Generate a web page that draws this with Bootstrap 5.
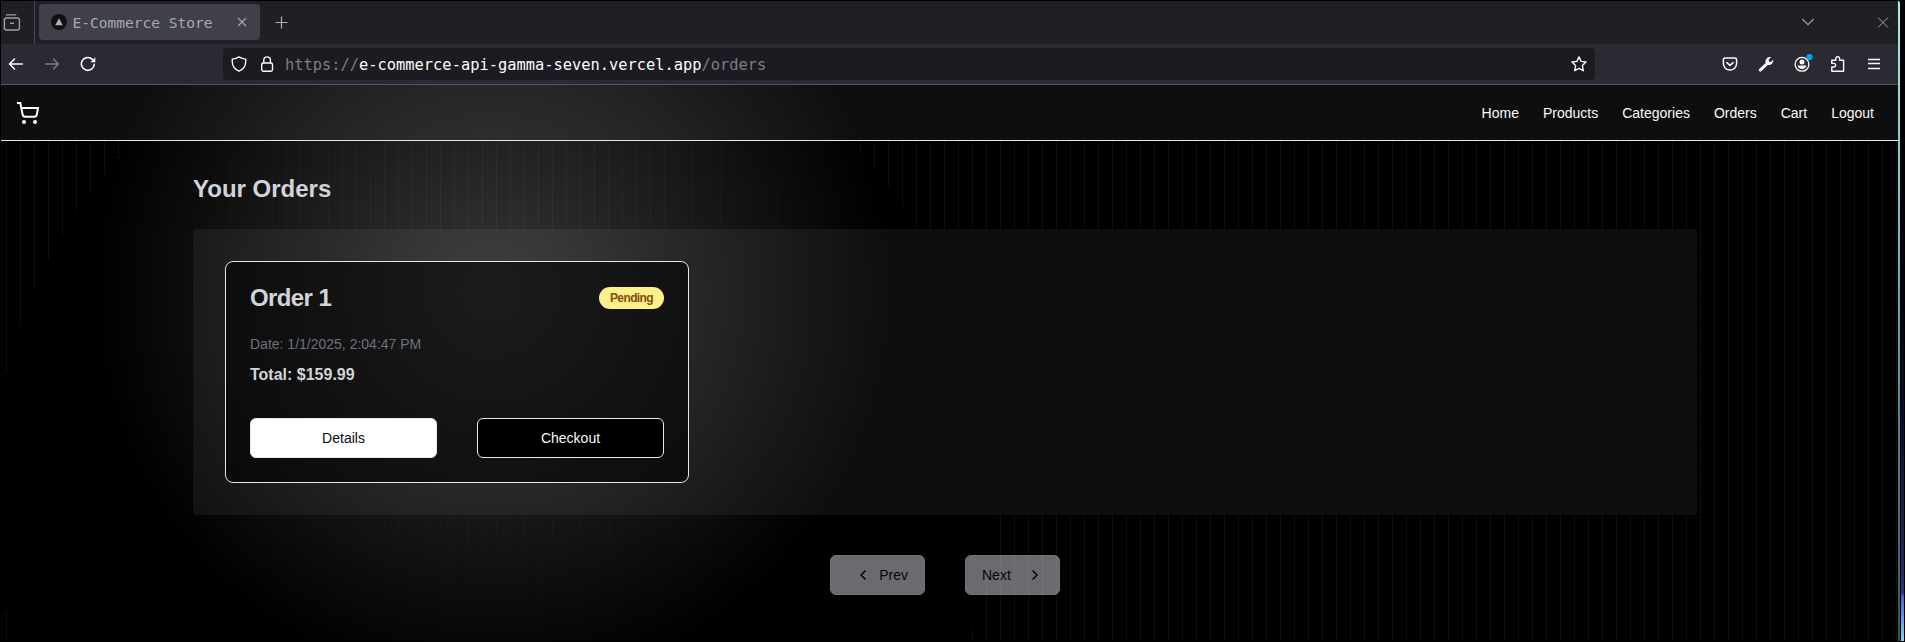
<!DOCTYPE html>
<html lang="en" data-bs-theme="dark">
<head>
<meta charset="utf-8">
<meta name="viewport" content="width=device-width, initial-scale=1">
<title>E-Commerce Store</title>
<link href="https://cdn.jsdelivr.net/npm/bootstrap@5.3.0/dist/css/bootstrap.min.css" rel="stylesheet">
<style>
  body { background: #000; height: 642px; overflow: hidden; font-family: "Liberation Sans", Arial, sans-serif; font-size: 14px; line-height: 20px; }
  svg { display: block; flex: none; }
  .app-window { width: 1897px; height: 640px; margin: 1px 0 0 1px; }
  .desk-edge { width: 7px; height: 640px; margin-top: 1px; }
  .glow-edge { width: 2px; height: 640px; background: linear-gradient(#a9efee 0, #9ed8d8 80px, #7fb5b6 240px, #5b8587 420px, #38545a 100%); border-top-right-radius: 2px; }
  .wall { width: 4px; height: 640px; margin-left: 1px; background: linear-gradient(#000 0, #030308 300px, #0d1030 430px, #1f1d3c 490px, #262660 560px, #2d3486 592px, #4068e0 596px, #4a7cf0 606px, #5b9df0 618px, #80d8f4 640px); clip-path: inset(0 1px 0 0); }
  .tabstrip { height: 43px; background: #201f26; color: #9f9fa3; }
  .tab-sep { width: 1px; height: 43px; background: #47464f; }
  .browser-tab { width: 221px; height: 36px; background: #40404a; border-radius: 4px; font: 14.55px/20px "DejaVu Sans Mono", monospace; color: #a9a9ad; }
  .toolbar-row { height: 41px; background: #2b2a33; border-bottom: 1px solid #55545f; color: #fbfbfe; }
  .urlbar { width: 1372px; height: 32px; background: #1c1b22; border-radius: 4px; font: 15.38px/20px "DejaVu Sans Mono", monospace; }
  .dim { color: #7e7d84; }
  .page { height: 556px; background: #000; }
  .backdrop { inset: 0; background-image: linear-gradient(to right, #4f4f4f2e 1px, transparent 1px), linear-gradient(to bottom, #8080800a 1px, transparent 1px); background-size: 14px 24px; background-position: 5px 0; }
  .spot { left: -9px; top: -94px; width: 1000px; height: 1000px; background: radial-gradient(circle 400px at 50% 300px, #fbfbfb36, #000); }
  .site-nav, .orders-panel { background: linear-gradient(#ffffff0e, #ffffff0e), radial-gradient(circle 400px at var(--spot-at), #fbfbfb36, #000) #000; }
  .site-nav { --spot-at: 491px 206px; height: 56px; }
  .site-nav { box-shadow: inset 0 -1px #e5e7eb; }
  .site-nav a { color: #fafafa; padding: 0; }
  .content-col { width: 1504px; margin-left: 192px; }
  h1 { font-size: 24px; line-height: 32px; color: #d1d5db; }
  .orders-panel { --spot-at: 299px 62px; height: 286px; padding: 32px; border-radius: 4px; }
  .order-card { width: 464px; height: 222px; padding: 24px; border: 1px solid #e5e7eb; border-radius: 8px; background: rgba(0,0,0,.57); color: #d4d4d8; }
  .order-card h2 { font-size: 24px; line-height: 24px; letter-spacing: -.6px; color: #d1d5db; }
  .order-status { width: 65px; height: 22px; font-size: 12px; line-height: 22px; letter-spacing: -.6px; background: #fef08a; color: #854d0e; }
  .order-date { color: #6b7280; }
  .order-total { font-size: 16px; line-height: 24px; margin-top: 9px; }
  .btn { height: 40px; padding: 0 16px; border-radius: 6px; font-size: 14px; line-height: 20px; }
  .btn-details { background: #fff; border-color: #e5e7eb; color: #0a0a14; }
  .btn-checkout { background: #000; border-color: #e5e7eb; color: #fafafa; }
  .btn-page { width: 95px; background: #d4d6dc; border-color: #e5e7eb; color: #09090b; opacity: .5; }
</style>
</head>
<body class="d-flex">
<div class="app-window flex-shrink-0">
  <div class="tabstrip d-flex align-items-start">
    <svg style="margin-top:13px" width="33" height="18" viewBox="0 0 33 18" fill="none" stroke="currentColor" stroke-width="1.4"><path d="M5.500.9h9.200" stroke-linecap="round"/><rect x="3.400" y="4" width="15" height="12" rx="2"/><path d="M9 9.300h4"/></svg>
    <div class="tab-sep"></div>
    <div class="browser-tab d-flex align-items-center ms-1" style="margin-top:3px">
      <svg style="margin-left:12px" width="16" height="16" viewBox="0 0 16 16"><circle cx="8" cy="8" r="8" fill="#101013"/><path d="M8 4.200l3.800 7H4.200z" fill="#b0b0b3"/></svg>
      <span class="text-nowrap" style="margin-left:5.500px;padding-top:2px">E-Commerce Store</span>
      <svg class="ms-auto" style="margin-right:12px" width="12" height="12" viewBox="0 0 12 12" stroke="currentColor" stroke-width="1.1"><path d="M2 2l8 8M10 2l-8 8"/></svg>
    </div>
    <svg style="margin:15px 0 0 15px" width="14" height="14" viewBox="0 0 14 14" stroke="#b0b0b3" stroke-width="1.2"><path d="M6.500 .5v12M.5 6.500h12"/></svg>
    <svg class="ms-auto" style="margin-top:17px;margin-right:62px" width="14" height="8" viewBox="0 0 14 8" fill="none" stroke="currentColor" stroke-width="1.3"><path d="M1.300 1L7 6.700 12.700 1"/></svg>
    <svg style="margin-top:16px;margin-right:9px" width="12" height="11" viewBox="0 0 12 11" stroke="currentColor" stroke-width="1"><path d="M1 .5l10 10M11 .5l-10 10"/></svg>
  </div>
  <div class="toolbar-row d-flex align-items-center">
    <svg width="16" height="16" style="margin-left:7px" viewBox="0 0 16 16" fill="none" stroke="currentColor" stroke-width="1.600" stroke-linecap="round" stroke-linejoin="round"><path d="M14.300 8H1.500M6.500 3L1.500 8l5 5"/></svg>
    <svg width="16" height="16" style="margin-left:20px" viewBox="0 0 16 16" fill="none" stroke="#7c7b82" stroke-width="1.500" stroke-linecap="round" stroke-linejoin="round"><path d="M1.500 8h13M9.500 3l5 5-5 5"/></svg>
    <svg width="16" height="16" style="margin-left:20px" viewBox="0 0 16 16" fill="none" stroke="currentColor" stroke-width="1.600" stroke-linecap="round"><path d="M14.200 8.200A6.400 6.400 0 1 1 12.300 3.400"/><path d="M15.300 1.300v4.900h-4.900z" fill="currentColor" stroke="none"/></svg>
    <div class="urlbar d-flex align-items-center" style="margin-left:127px">
      <svg width="16" height="16" style="margin-left:8px" viewBox="0 0 16 16" fill="none" stroke="currentColor" stroke-width="1.400" stroke-linejoin="round"><path d="M8 .9C6 2.200 3.800 2.900 1.300 3.100v2.700C1.300 10.300 4 13.500 8 15.200c4-1.700 6.700-4.900 6.700-9.400V3.100C12.200 2.900 10 2.200 8 .9z"/></svg>
      <svg width="16" height="16" style="margin-left:12px" viewBox="0 0 16 16" fill="none" stroke="currentColor" stroke-width="1.400"><rect x="2.700" y="7" width="10.800" height="8.200" rx="1.600"/><path d="M4.800 7V4.200a3.300 3.300 0 0 1 6.600 0V7"/></svg>
      <div class="text-nowrap" style="margin-left:10px;padding-top:2px"><span class="dim">https://</span>e-commerce-api-gamma-seven.vercel.app<span class="dim">/orders</span></div>
      <svg class="ms-auto" style="margin-right:8px" width="16" height="16" viewBox="0 0 16 16" fill="none" stroke="currentColor" stroke-width="1.400" stroke-linejoin="round"><path d="M8 .9l2.100 4.500 4.900.6-3.600 3.500.9 5.200L8 12.400l-4.300 2.300.9-5.200L1 6l4.900-.6z"/></svg>
    </div>
    <div class="d-flex align-items-center ms-auto" style="gap:20px;margin-right:16px">
      <svg width="16" height="16" viewBox="0 0 16 16" fill="none" stroke="currentColor" stroke-width="1.500" stroke-linecap="round" stroke-linejoin="round"><path d="M3 2h10a1.600 1.600 0 0 1 1.600 1.600v3.900a6.600 6.600 0 0 1-13.200 0V3.600A1.600 1.600 0 0 1 3 2z"/><path d="M4.900 6.600L8 9.400l3.100-2.800"/></svg>
      <svg width="16" height="16" viewBox="0 0 16 16" fill="currentColor"><path d="M1.300 13.100l6.300-6.200C6.900 4 8.900 1 12.200 1.100l.9.200-2.500 2.500.4 1.700 1.900.4 2.300-2.200c.6 3.100-2.300 6.100-5.400 5.200l-6.600 6.300a1.300 1.300 0 0 1-1.900-2.100z"/></svg>
      <svg width="16" height="16" viewBox="0 0 16 16" class="overflow-visible"><circle cx="8" cy="8.300" r="6.900" fill="none" stroke="currentColor" stroke-width="1.300"/><circle cx="8" cy="6.100" r="2.500" fill="currentColor"/><path d="M3.600 9.600h8.800c-.3 2-2.100 3.500-4.400 3.500s-4.100-1.500-4.400-3.500z" fill="currentColor"/><circle cx="15.500" cy="1" r="3.100" fill="#00a6ee"/></svg>
      <svg width="16" height="16" viewBox="0 0 16 16" fill="none" stroke="currentColor" stroke-width="1.400" stroke-linejoin="round"><path d="M1.800 15.200V11h2a1.800 1.800 0 0 0 0-3.600h-2V4.300h4V2.700a1.900 1.900 0 0 1 3.800 0v1.600h4v10.900z"/></svg>
      <svg width="16" height="16" viewBox="0 0 16 16" stroke="currentColor" stroke-width="1.300"><path d="M2 3.500h12M2 7.500h12M2 12.500h12"/></svg>
    </div>
  </div>
  <div class="page position-relative overflow-hidden">
    <div class="backdrop position-absolute"></div>
    <div class="spot position-absolute rounded-circle"></div>
    <nav class="site-nav position-relative d-flex align-items-center justify-content-between">
      <a class="navbar-brand m-0 ps-3" href="#"><svg width="22" height="22" viewBox="0 0 22 22" fill="none" stroke="#fff" stroke-width="2"><path d="M0 1h3.300l2.300 11.500c.3 1.400 1 2.200 2.400 2.200h9.500c1.300 0 2-.6 2.300-1.900L21 6H4.300"/><circle cx="7" cy="20" r="2" fill="#fff" stroke="none"/><circle cx="18" cy="20" r="2" fill="#fff" stroke="none"/></svg></a>
      <div class="nav flex-nowrap gap-4 me-4">
        <a class="nav-link" href="#">Home</a><a class="nav-link" href="#">Products</a><a class="nav-link" href="#">Categories</a><a class="nav-link" href="#">Orders</a><a class="nav-link" href="#">Cart</a><a class="nav-link" href="#">Logout</a>
      </div>
    </nav>
    <main class="content-col position-relative" style="padding-top:32px">
      <h1 class="fw-bold mb-4">Your Orders</h1>
      <section class="orders-panel">
        <article class="order-card d-flex flex-column">
          <div class="d-flex justify-content-between align-items-center mb-4">
            <h2 class="fw-bold m-0">Order 1</h2>
            <span class="order-status rounded-pill fw-bold text-center">Pending</span>
          </div>
          <div class="order-date">Date: 1/1/2025, 2:04:47 PM</div>
          <div class="order-total fw-bold">Total: $159.99</div>
          <div class="d-flex mt-auto" style="gap:40px">
            <button class="btn btn-details flex-fill w-50">Details</button>
            <button class="btn btn-checkout flex-fill w-50">Checkout</button>
          </div>
        </article>
      </section>
      <div class="d-flex justify-content-center" style="gap:40px;margin-top:40px">
        <button class="btn btn-page d-flex align-items-center justify-content-end"><svg class="me-2" width="16" height="16" viewBox="0 0 16 16" fill="none" stroke="currentColor" stroke-width="1.500"><path d="M10.500 3.500L6 8l4.500 4.500"/></svg>Prev</button>
        <button class="btn btn-page d-flex align-items-center">Next<svg style="margin-left:16px" width="16" height="16" viewBox="0 0 16 16" fill="none" stroke="currentColor" stroke-width="1.500"><path d="M5.500 3.500L10 8l-4.500 4.500"/></svg></button>
      </div>
    </main>
  </div>
</div>
<div class="desk-edge d-flex flex-shrink-0"><div class="glow-edge"></div><div class="wall"></div></div>
<script src="https://cdn.jsdelivr.net/npm/bootstrap@5.3.0/dist/js/bootstrap.bundle.min.js"></script>
</body>
</html>
